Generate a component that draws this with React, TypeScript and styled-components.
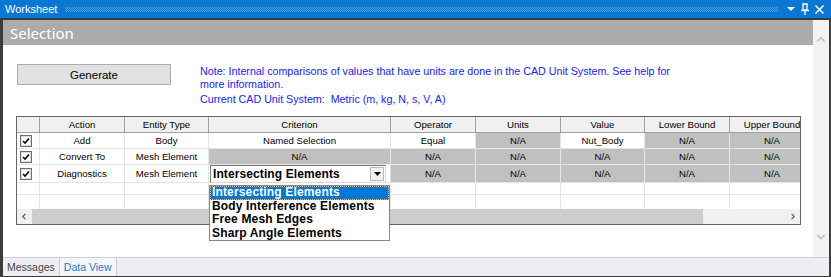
import React from 'react';
import styled, { createGlobalStyle } from 'styled-components';

const GlobalStyle = createGlobalStyle`
  html, body {
    margin: 0;
    padding: 0;
    background: #ffffff;
  }
  body {
    font-family: "Liberation Sans", Arial, sans-serif;
  }
`;

const Window = styled.div`
  width: 831px;
  height: 277px;
  display: flex;
  flex-direction: column;
  overflow: hidden;
  background: #ffffff;
`;

const TitleBar = styled.div`
  height: 18px;
  background: #0a78d2;
  display: flex;
  align-items: center;
  padding: 0 6px 0 5px;
  gap: 4px;
  color: #ffffff;
  font-size: 11px;
`;

const Dots = styled.div`
  flex: 1;
  height: 5px;
  margin: 0 4px;
  background: repeating-conic-gradient(#4a9ee0 0 25%, transparent 0 50%) 0 0 / 2px 2px;
`;

const TitleIcons = styled.div`
  display: flex;
  align-items: center;
  gap: 4px;
`;

const Frame = styled.div`
  flex: 1;
  display: flex;
  flex-direction: column;
  border-top: 2px solid #3c3c3c;
  border-left: 3px solid #3c3c3c;
  border-right: 2px solid #3c3c3c;
  border-bottom: 1px solid #3c3c3c;
  min-height: 0;
`;

const Main = styled.div`
  flex: 1;
  display: flex;
  min-height: 0;
`;

const Content = styled.div`
  flex: 1;
  display: flex;
  flex-direction: column;
  min-width: 0;
`;

const SectionHeader = styled.div`
  height: 25px;
  background: #ababab;
  color: #ffffff;
  font-family: "Noto Sans", "Liberation Sans", sans-serif;
  font-size: 15px;
  display: flex;
  align-items: center;
  padding-left: 7px;
`;

const Body = styled.div`
  flex: 1;
  padding: 19px 0 0 13px;
  display: flex;
  flex-direction: column;
`;

const TopRow = styled.div`
  display: flex;
  align-items: flex-start;
  gap: 29px;
  padding-left: 1px;
`;

const Button = styled.button`
  width: 154px;
  height: 21px;
  background: #e1e1e1;
  border: 1px solid #adadad;
  font-family: "Liberation Sans", Arial, sans-serif;
  font-size: 11.5px;
  color: #000000;
  padding: 0;
`;

const Note = styled.div`
  color: #2222ee;
  font-size: 10.7px;
  line-height: 13px;
  width: 476px;
  margin-top: 1px;
`;

const NoteLine = styled.p<{ $gap?: number }>`
  margin: ${(p) => p.$gap ?? 0}px 0 0 0;
`;

const TableWrap = styled.div`
  position: relative;
  margin-top: 10px;
  width: 785px;
`;

const TableBox = styled.div`
  height: 109px;
  border: 1px solid #646464;
  box-sizing: border-box;
  display: flex;
  flex-direction: column;
  overflow: hidden;
`;

const GridArea = styled.div`
  flex: 1;
  overflow: hidden;
  min-height: 0;
`;

const Grid = styled.div`
  display: grid;
  grid-template-columns: 23px 85px 84px 182px 85px 85px 84px 85px 85px;
  grid-template-rows: 16px 16px 16px 18px 12px 16px;
  width: 818px;
  font-size: 9.6px;
  color: #000000;
`;

type Tone = 'head' | 'white' | 'gray';

const Cell = styled.div<{ $tone: Tone; $left?: boolean }>`
  box-sizing: border-box;
  border-right: 1px solid ${(p) => (p.$tone === 'head' ? '#a0a0a0' : '#e4e4e4')};
  border-bottom: 1px solid ${(p) => (p.$tone === 'head' ? '#a0a0a0' : '#e4e4e4')};
  background: ${(p) => (p.$tone === 'head' ? '#f0f0f0' : p.$tone === 'gray' ? '#c0c0c0' : '#ffffff')};
  display: flex;
  align-items: center;
  justify-content: ${(p) => (p.$left ? 'flex-start' : 'center')};
  padding-left: ${(p) => (p.$left ? '3px' : '0')};
  white-space: nowrap;
  overflow: visible;
  position: relative;
`;

const Combo = styled.div`
  position: absolute;
  left: 1px;
  top: 0;
  width: 176px;
  height: 18px;
  box-sizing: border-box;
  border: 1px solid #7a7a7a;
  border-right-color: #d8d8d8;
  border-bottom-color: #d8d8d8;
  background: #ffffff;
  display: flex;
  align-items: center;
  justify-content: space-between;
  font-size: 12px;
  font-weight: bold;
  letter-spacing: 0.1px;
  padding-left: 2px;
  z-index: 2;
`;

const ComboButton = styled.div`
  width: 14px;
  height: 14px;
  margin-right: 1px;
  background: #f0f0f0;
  border: 1px solid #b8b8b8;
  box-sizing: border-box;
  display: flex;
  align-items: center;
  justify-content: center;
`;

const HScroll = styled.div`
  height: 15px;
  display: flex;
  background: #f0f0f0;
`;

const ArrowButton = styled.div`
  width: 15px;
  display: flex;
  align-items: center;
  justify-content: center;
`;

const Thumb = styled.div`
  width: 671px;
  background: #cdcdcd;
`;

const Track = styled.div`
  flex: 1;
`;

const DropList = styled.div`
  position: absolute;
  left: 193px;
  top: 69px;
  width: 181px;
  height: 56px;
  box-sizing: border-box;
  border: 1px solid #828790;
  background: #ffffff;
  font-size: 12px;
  font-weight: bold;
  letter-spacing: 0.15px;
  z-index: 5;
`;

const DropItem = styled.div<{ $active?: boolean }>`
  height: 13.5px;
  line-height: 13px;
  padding-left: 2px;
  color: ${(p) => (p.$active ? '#ffffff' : '#000000')};
  background: ${(p) => (p.$active ? '#0078d7' : 'transparent')};
  outline: ${(p) => (p.$active ? '1px dotted #f2b36a' : 'none')};
  outline-offset: -1px;
  white-space: nowrap;
`;

const VScroll = styled.div`
  width: 16px;
  background: #f2f2f2;
  display: flex;
  flex-direction: column;
  justify-content: space-between;
  align-items: center;
  padding: 14px 0 16px;
`;

const TabBar = styled.div`
  height: 18px;
  border-top: 1px solid #cccedb;
  background: #eeeef2;
  display: flex;
  font-size: 10.5px;
`;

const Tab = styled.div<{ $active?: boolean }>`
  padding: 0 4px;
  display: flex;
  align-items: center;
  color: ${(p) => (p.$active ? '#1e7bc8' : '#444444')};
  background: ${(p) => (p.$active ? '#f5f5f5' : 'transparent')};
  border-left: ${(p) => (p.$active ? '1px solid #cccedb' : 'none')};
  border-right: ${(p) => (p.$active ? '1px solid #cccedb' : 'none')};
`;

const CheckIcon = () => (
  <svg width="12" height="12" viewBox="0 0 12 12">
    <rect x="0.5" y="0.5" width="11" height="11" fill="#ffffff" stroke="#6e6e6e" />
    <rect x="1.5" y="1.5" width="9" height="9" fill="none" stroke="#dcdcdc" />
    <path d="M3 6 L5 8 L9 3.5" fill="none" stroke="#000000" strokeWidth="1.6" />
  </svg>
);

const Chevron = ({ dir, color, size = 8 }: { dir: 'up' | 'down' | 'left' | 'right'; color: string; size?: number }) => {
  const d = {
    up: 'M1 6 L4 3 L7 6',
    down: 'M1 3 L4 6 L7 3',
    left: 'M5 1 L2 4 L5 7',
    right: 'M3 1 L6 4 L3 7',
  }[dir];
  return (
    <svg width={size} height={size} viewBox="0 0 8 8">
      <path d={d} fill="none" stroke={color} strokeWidth="1.4" />
    </svg>
  );
};

type CellSpec = { text?: string; tone: 'white' | 'gray'; check?: boolean; combo?: boolean };

const headers = ['', 'Action', 'Entity Type', 'Criterion', 'Operator', 'Units', 'Value', 'Lower Bound', 'Upper Bound'];

const W = (text = ''): CellSpec => ({ text, tone: 'white' });
const G = (): CellSpec => ({ text: 'N/A', tone: 'gray' });

const rows: CellSpec[][] = [
  [{ tone: 'white', check: true }, W('Add'), W('Body'), W('Named Selection'), W('Equal'), G(), W('Nut_Body'), G(), G()],
  [{ tone: 'white', check: true }, W('Convert To'), W('Mesh Element'), G(), G(), G(), G(), G(), G()],
  [{ tone: 'white', check: true }, W('Diagnostics'), W('Mesh Element'), { tone: 'white', combo: true }, G(), G(), G(), G(), G()],
  Array.from({ length: 9 }, () => W()),
  Array.from({ length: 9 }, () => W()),
];

const options = ['Intersecting Elements', 'Body Interference Elements', 'Free Mesh Edges', 'Sharp Angle Elements'];

export default function App() {
  return (
    <>
      <GlobalStyle />
      <Window>
        <TitleBar>
          <span>Worksheet</span>
          <Dots />
          <TitleIcons>
            <svg width="10" height="10" viewBox="0 0 10 10">
              <path d="M1 3 H9 L5 7 Z" fill="#ffffff" />
            </svg>
            <svg width="10" height="12" viewBox="0 0 10 12">
              <path d="M3 1 H7 V7 H3 Z M1 7.5 H9 M5 8 V12" fill="none" stroke="#ffffff" strokeWidth="1.3" />
            </svg>
            <svg width="11" height="11" viewBox="0 0 11 11">
              <path d="M1.5 1.5 L9.5 9.5 M9.5 1.5 L1.5 9.5" stroke="#ffffff" strokeWidth="1.6" />
            </svg>
          </TitleIcons>
        </TitleBar>
        <Frame>
          <Main>
            <Content>
              <SectionHeader>Selection</SectionHeader>
              <Body>
                <TopRow>
                  <Button>Generate</Button>
                  <Note>
                    <NoteLine>
                      Note: Internal comparisons of values that have units are done in the CAD Unit System. See help for more information.
                    </NoteLine>
                    <NoteLine $gap={2}>Current CAD Unit System:&nbsp; Metric (m, kg, N, s, V, A)</NoteLine>
                  </Note>
                </TopRow>
                <TableWrap>
                  <TableBox>
                    <GridArea>
                      <Grid>
                        {headers.map((h, i) => (
                          <Cell key={'h' + i} $tone="head">
                            {h}
                          </Cell>
                        ))}
                        {rows.map((row, r) =>
                          row.map((c, i) => (
                            <Cell key={r + '-' + i} $tone={c.tone} $left={c.check}>
                              {c.check && <CheckIcon />}
                              {c.combo ? (
                                <Combo>
                                  <span>Intersecting Elements</span>
                                  <ComboButton>
                                    <svg width="7" height="4" viewBox="0 0 7 4">
                                      <path d="M0 0 H7 L3.5 4 Z" fill="#000000" />
                                    </svg>
                                  </ComboButton>
                                </Combo>
                              ) : (
                                c.text
                              )}
                            </Cell>
                          ))
                        )}
                      </Grid>
                    </GridArea>
                    <HScroll>
                      <ArrowButton>
                        <Chevron dir="left" color="#606060" size={7} />
                      </ArrowButton>
                      <Thumb />
                      <Track />
                      <ArrowButton>
                        <Chevron dir="right" color="#606060" size={7} />
                      </ArrowButton>
                    </HScroll>
                  </TableBox>
                  <DropList>
                    {options.map((o, i) => (
                      <DropItem key={o} $active={i === 0}>
                        {o}
                      </DropItem>
                    ))}
                  </DropList>
                </TableWrap>
              </Body>
            </Content>
            <VScroll>
              <Chevron dir="up" color="#c2c2c2" size={10} />
              <Chevron dir="down" color="#c2c2c2" size={10} />
            </VScroll>
          </Main>
          <TabBar>
            <Tab>Messages</Tab>
            <Tab $active>Data View</Tab>
          </TabBar>
        </Frame>
      </Window>
    </>
  );
}
